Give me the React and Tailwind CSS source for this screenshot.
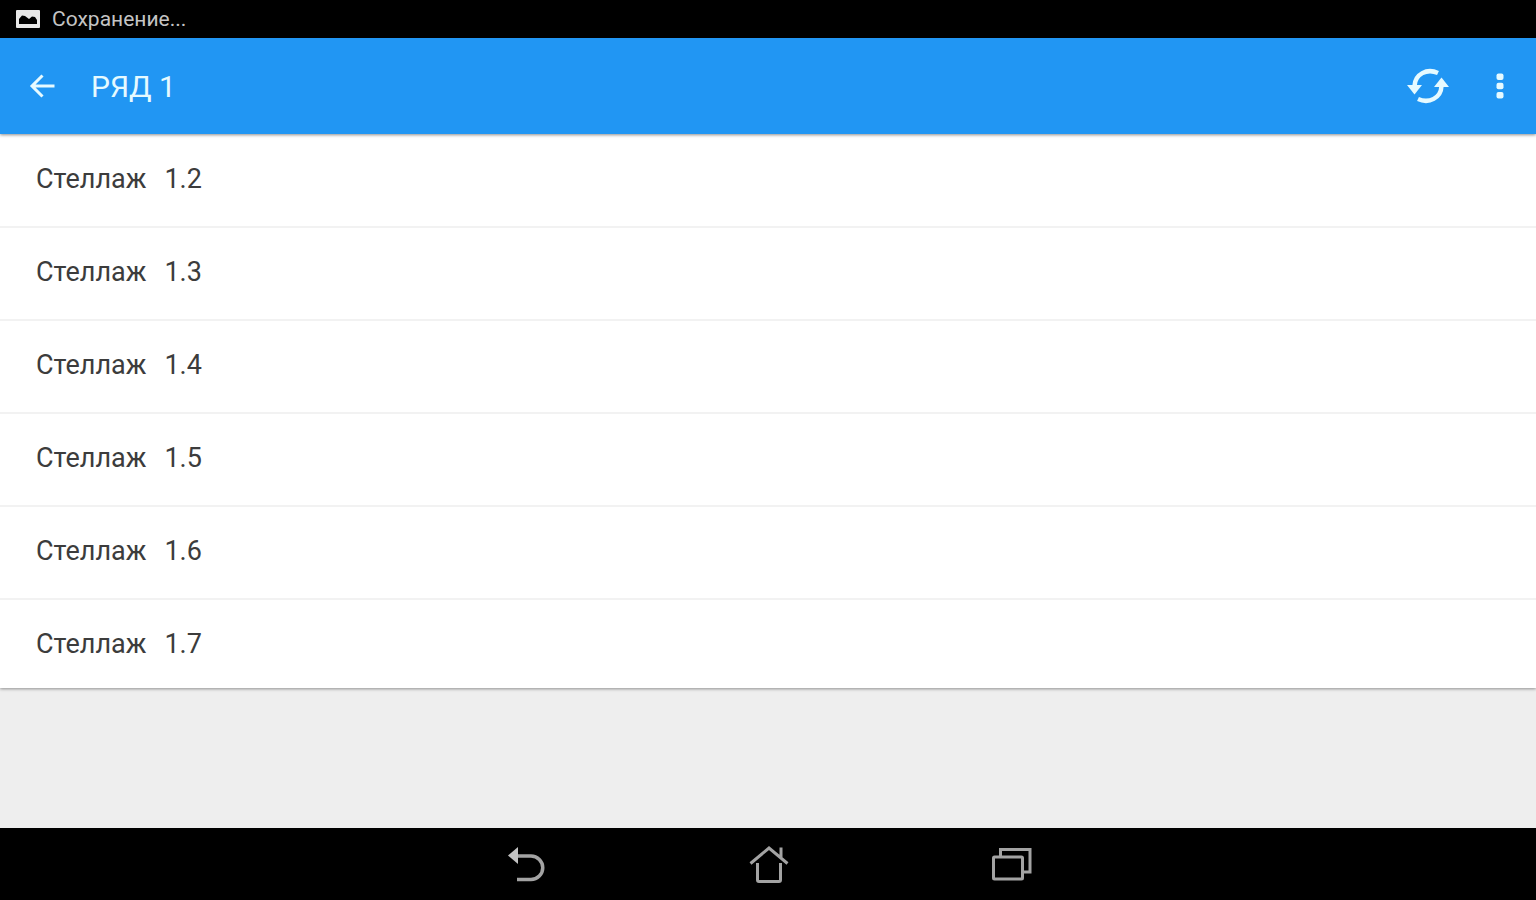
const racks = ['1.2', '1.3', '1.4', '1.5', '1.6', '1.7'];

function StatusBar() {
  return (
    <div className="flex h-[38px] shrink-0 items-center gap-3 bg-black px-4 text-[#c4c4c4]">
      <svg width="24" height="18" viewBox="0 0 24 18" aria-hidden="true">
        <rect width="24" height="18" rx="1" fill="#e8e8e8" />
        <path d="M3 14V9l3-3.500 3 0.500 4 3 3-2.500 3 0.500 2 3v4z" fill="#000" />
      </svg>
      <span className="text-[21px] leading-6">Сохранение...</span>
    </div>
  );
}

function AppBar() {
  return (
    <header className="relative z-10 flex h-24 shrink-0 items-center bg-[#2196f3] pr-4 pl-6 text-[#e6faff] shadow-[0_1px_3px_rgba(0,0,0,0.45)]">
      <button type="button" aria-label="Назад" className="flex h-12 w-9 items-center justify-center">
        <svg width="26" height="26" viewBox="0 0 26 26" fill="none" stroke="currentColor" strokeWidth="3" aria-hidden="true">
          <path d="M25.500 13H3M13.500 2.500L3 13l10.500 10.500" />
        </svg>
      </button>
      <h1 className="ml-[31px] flex-1 pt-0.5 text-[30px] leading-9">РЯД 1</h1>
      <button type="button" aria-label="Обновить" className="flex size-12 items-center justify-center">
        <svg width="42" height="36" viewBox="0 0 42 36" fill="none" aria-hidden="true">
          <path d="M31 5C20 0 8 6 7.500 18" stroke="currentColor" strokeWidth="4.500" />
          <path d="M0 17h15l-7.500 9.500z" fill="currentColor" />
          <path d="M11 31C22 36 34 30 34.500 18" stroke="currentColor" strokeWidth="4.500" />
          <path d="M27 19h15l-7.500-9.500z" fill="currentColor" />
        </svg>
      </button>
      <button type="button" aria-label="Ещё" className="ml-7 flex h-12 w-10 items-center justify-center">
        <svg width="8" height="26" viewBox="0 0 8 26" fill="currentColor" aria-hidden="true">
          <rect x="0.500" y="0.500" width="7" height="6.500" rx="2" />
          <rect x="0.500" y="9.750" width="7" height="6.500" rx="2" />
          <rect x="0.500" y="19" width="7" height="6.500" rx="2" />
        </svg>
      </button>
    </header>
  );
}

function NavBar() {
  return (
    <nav className="flex h-[72px] shrink-0 items-center justify-center gap-[195px] bg-black pl-0.5 text-[#a3a3a3]">
      <button type="button" aria-label="Назад" className="flex size-12 items-center justify-center">
        <svg width="38" height="36" viewBox="0 0 38 36" fill="none" aria-hidden="true">
          <path d="M9 10H24a11.750 11.750 0 0 1 0 23.500H10" stroke="currentColor" strokeWidth="3.500" />
          <path d="M1 9.500L11 1v17z" fill="#c4c4c4" />
        </svg>
      </button>
      <button type="button" aria-label="Домой" className="flex size-12 items-center justify-center">
        <svg width="40" height="38" viewBox="0 0 40 38" fill="none" stroke="currentColor" strokeWidth="3" aria-hidden="true">
          <path d="M1.500 18.500L20 3l18.500 15.500M32 12V2.500" />
          <path d="M8.500 18v17a1.500 1.500 0 0 0 1.500 1.500h20a1.500 1.500 0 0 0 1.500-1.500V18" />
        </svg>
      </button>
      <button type="button" aria-label="Недавние приложения" className="flex size-12 items-center justify-center">
        <svg width="40" height="34" viewBox="0 0 40 34" fill="none" stroke="currentColor" strokeWidth="3" aria-hidden="true">
          <rect x="1.500" y="10" width="29" height="22" rx="1" />
          <path d="M8.500 9V2.500H38V25h-6" />
        </svg>
      </button>
    </nav>
  );
}

export default function App() {
  return (
    <div className="flex min-h-screen flex-col bg-[#eeeeee] font-[Roboto,sans-serif]">
      <StatusBar />
      <AppBar />
      <main className="flex-1">
        <ul className="bg-white pt-px shadow-[0_1px_3px_rgba(0,0,0,0.4)]">
          {racks.map((rack) => (
            <li key={rack} className="border-b-2 border-[#f2f2f2] pb-[3px] last:border-b-0 last:pb-0">
              <a href={`#${rack}`} className="flex gap-[18px] px-9 pt-7 pb-7 text-[27px] leading-8 text-[#3c3c3c]">
                <span>Стеллаж</span>
                <span>{rack}</span>
              </a>
            </li>
          ))}
        </ul>
      </main>
      <NavBar />
    </div>
  );
}
